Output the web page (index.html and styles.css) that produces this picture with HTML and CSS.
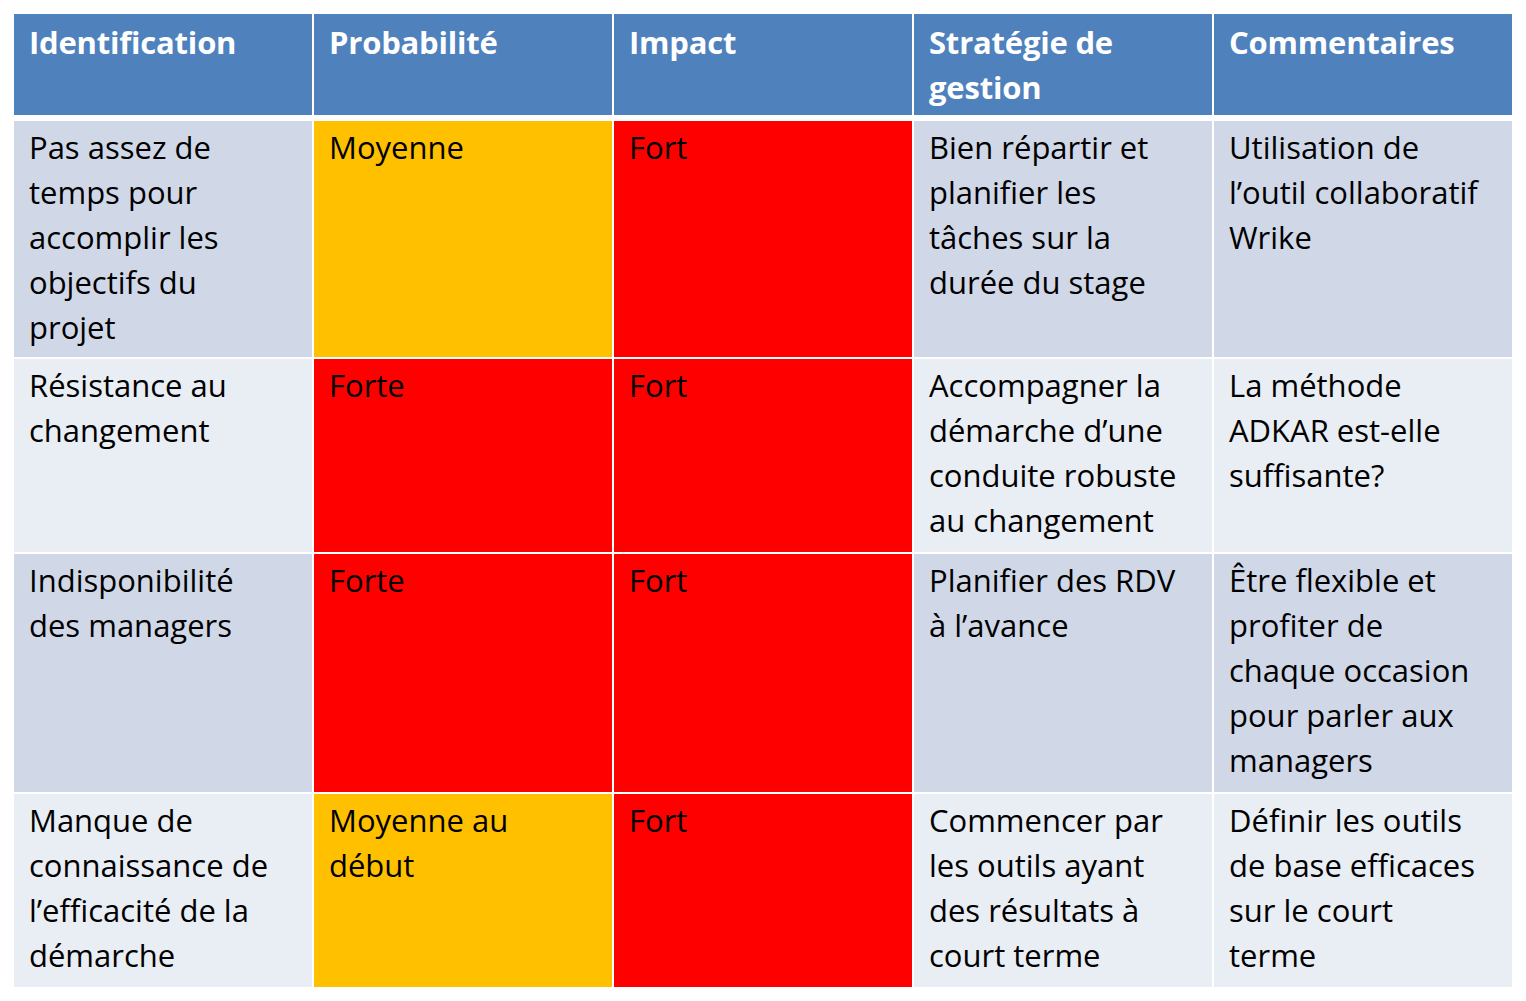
FILE: index.html
```html
<!DOCTYPE html>
<html lang="fr">
<head>
<meta charset="utf-8">
<title>Risques</title>
<link rel="stylesheet" href="styles.css">
</head>
<body>
<div class="table">
  <div class="row head">
    <div class="cell">Identification</div>
    <div class="cell">Probabilité</div>
    <div class="cell">Impact</div>
    <div class="cell">Stratégie de<br>gestion</div>
    <div class="cell">Commentaires</div>
  </div>
  <div class="row odd r1">
    <div class="cell">Pas assez de<br>temps pour<br>accomplir les<br>objectifs du<br>projet</div>
    <div class="cell orange">Moyenne</div>
    <div class="cell red">Fort</div>
    <div class="cell">Bien répartir et<br>planifier les<br>tâches sur la<br>durée du stage</div>
    <div class="cell">Utilisation de<br>l’outil collaboratif<br>Wrike</div>
  </div>
  <div class="row even r2">
    <div class="cell">Résistance au<br>changement</div>
    <div class="cell red">Forte</div>
    <div class="cell red">Fort</div>
    <div class="cell">Accompagner la<br>démarche d’une<br>conduite robuste<br>au changement</div>
    <div class="cell">La méthode<br>ADKAR est-elle<br>suffisante?</div>
  </div>
  <div class="row odd r3">
    <div class="cell">Indisponibilité<br>des managers</div>
    <div class="cell red">Forte</div>
    <div class="cell red">Fort</div>
    <div class="cell">Planifier des RDV<br>à l’avance</div>
    <div class="cell">Être flexible et<br>profiter de<br>chaque occasion<br>pour parler aux<br>managers</div>
  </div>
  <div class="row even r4">
    <div class="cell">Manque de<br>connaissance de<br>l’efficacité de la<br>démarche</div>
    <div class="cell orange">Moyenne au<br>début</div>
    <div class="cell red">Fort</div>
    <div class="cell">Commencer par<br>les outils ayant<br>des résultats à<br>court terme</div>
    <div class="cell">Définir les outils<br>de base efficaces<br>sur le court<br>terme</div>
  </div>
</div>
</body>
</html>
```

FILE: styles.css
```css
html, body {
  margin: 0;
  background: #ffffff;
}
body {
  padding: 14px;
  font-family: "Open Sans", "Liberation Sans", sans-serif;
  font-size: 31px;
  line-height: 45px;
  color: #000000;
}
.table {
  display: flex;
  flex-direction: column;
  gap: 2px;
  width: 1498px;
}
.row {
  display: grid;
  grid-template-columns: repeat(5, 298px);
  column-gap: 2px;
}
.cell {
  padding: 4px 0 0 15px;
  white-space: nowrap;
  letter-spacing: 0;
}
.head {
  height: 101px;
  margin-bottom: 4px;
}
.head .cell {
  background: #4f81bd;
  color: #ffffff;
  font-weight: 700;
  padding-top: 6px;
  letter-spacing: -0.2px;
}
.odd .cell { background: #d0d8e8; }
.even .cell { background: #e9edf4; }
.row .cell.orange { background: #ffc000; }
.row .cell.red { background: #ff0000; }
.r1 { height: 236px; }
.r2 { height: 193px; }
.r3 { height: 238px; }
.r4 { height: 193px; }
```
